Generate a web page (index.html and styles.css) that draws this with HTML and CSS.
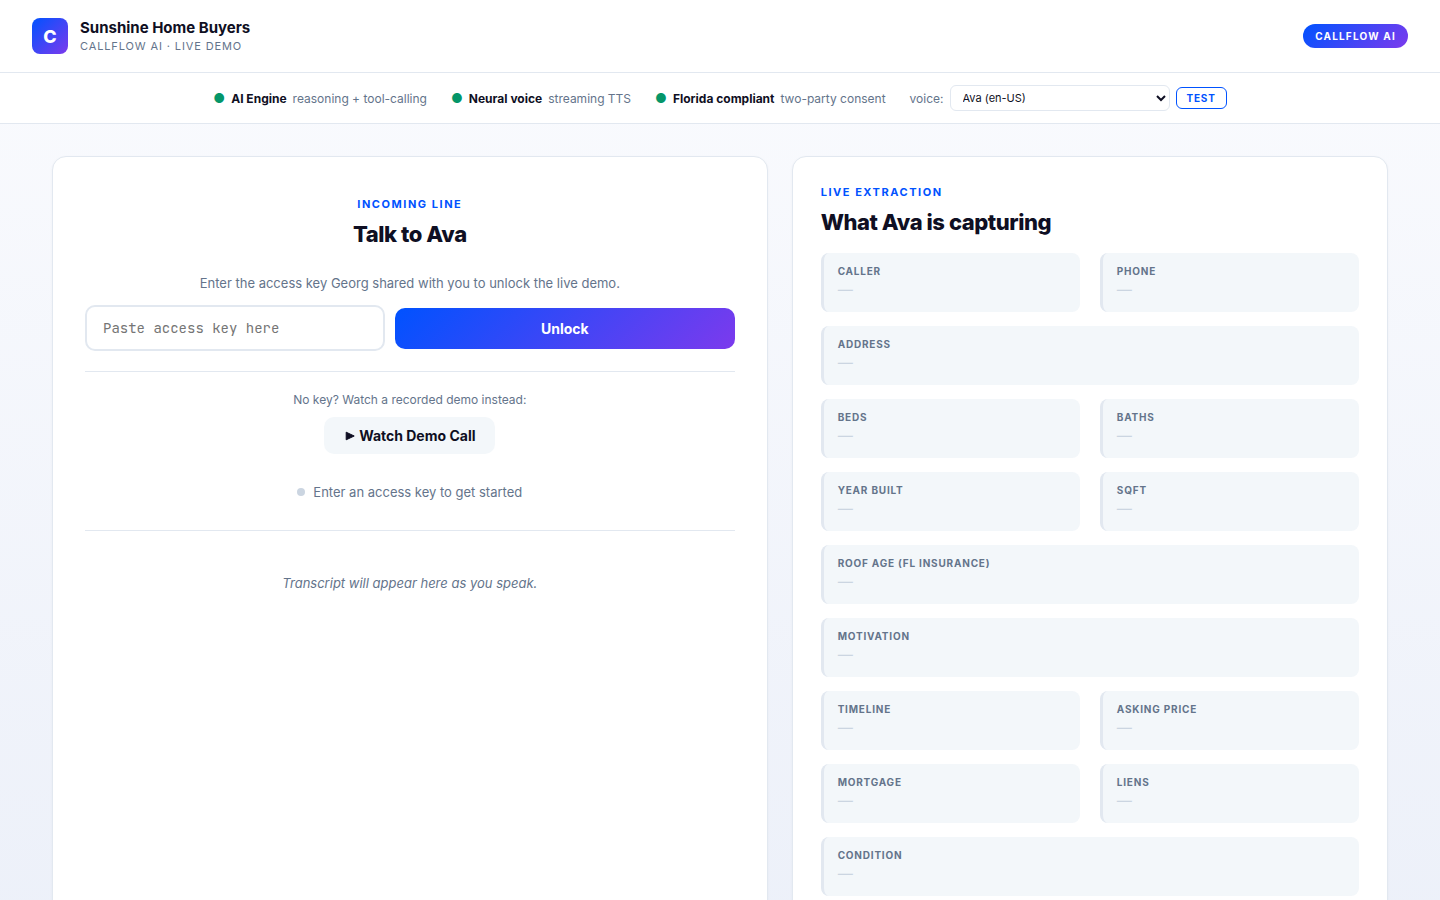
FILE: index.html
```html
<!DOCTYPE html>
<html lang="en">
<head>
  <meta charset="UTF-8" />
  <meta name="viewport" content="width=device-width, initial-scale=1.0"/>
  <title>Sunshine Home Buyers - CallFlow AI</title>
  <link rel="stylesheet" href="styles.css">
</head>
<body>
  <header class="topbar">
    <div class="brand">
      <div class="logo">C</div>
      <div>
        <div class="brand-name">Sunshine Home Buyers</div>
        <div class="brand-sub">CallFlow AI · Live Demo</div>
      </div>
    </div>
    <span class="badge">CallFlow AI</span>
  </header>

  <div class="status-bar">
    <div class="status-item"><span class="tick">●</span><strong>AI Engine</strong><span>reasoning + tool-calling</span></div>
    <div class="status-item"><span class="tick">●</span><strong>Neural voice</strong><span>streaming TTS</span></div>
    <div class="status-item"><span class="tick">●</span><strong>Florida compliant</strong><span>two-party consent</span></div>
    <div class="status-item">
      <label for="voice">voice:</label>
      <select id="voice" class="voice-select">
        <option>Ava (en-US)</option>
      </select>
      <button type="button" class="btn-test">TEST</button>
    </div>
  </div>

  <main class="layout">
    <section class="card call-card">
      <div class="eyebrow">Incoming line</div>
      <h2>Talk to Ava</h2>

      <form class="gate">
        <label for="access-key" class="gate-label">Enter the access key Georg shared with you to unlock the live demo.</label>
        <div class="gate-row">
          <input type="text" id="access-key" class="key-input" placeholder="Paste access key here" autocomplete="off" />
          <button type="button" class="btn-primary">Unlock</button>
        </div>
      </form>

      <div class="demo">
        <p class="demo-text">No key? Watch a recorded demo instead:</p>
        <button type="button" class="btn-secondary">
          <svg class="play" width="11" height="10" viewBox="0 0 11 10" aria-hidden="true"><path d="M2.2 1.2 L10.2 5 L2.2 8.8 Z" fill="currentColor" stroke="currentColor" stroke-linejoin="round"/></svg>
          Watch Demo Call
        </button>
      </div>

      <div class="call-status"><span class="dot"></span><span>Enter an access key to get started</span></div>

      <div class="transcript">
        <p class="transcript-empty">Transcript will appear here as you speak.</p>
      </div>
    </section>

    <section class="card data-card">
      <div class="eyebrow">Live extraction</div>
      <h2>What Ava is capturing</h2>
      <div class="fields">
        <div class="field"><div class="field-label">Caller</div><div class="field-value">—</div></div>
        <div class="field"><div class="field-label">Phone</div><div class="field-value">—</div></div>
        <div class="field full"><div class="field-label">Address</div><div class="field-value">—</div></div>
        <div class="field"><div class="field-label">Beds</div><div class="field-value">—</div></div>
        <div class="field"><div class="field-label">Baths</div><div class="field-value">—</div></div>
        <div class="field"><div class="field-label">Year built</div><div class="field-value">—</div></div>
        <div class="field"><div class="field-label">Sqft</div><div class="field-value">—</div></div>
        <div class="field full"><div class="field-label">Roof age (FL insurance)</div><div class="field-value">—</div></div>
        <div class="field full"><div class="field-label">Motivation</div><div class="field-value">—</div></div>
        <div class="field"><div class="field-label">Timeline</div><div class="field-value">—</div></div>
        <div class="field"><div class="field-label">Asking price</div><div class="field-value">—</div></div>
        <div class="field"><div class="field-label">Mortgage</div><div class="field-value">—</div></div>
        <div class="field"><div class="field-label">Liens</div><div class="field-value">—</div></div>
        <div class="field full"><div class="field-label">Condition</div><div class="field-value">—</div></div>
      </div>
    </section>
  </main>
</body>
</html>
```

FILE: styles.css
```css
:root {
  --blue: #0052ff;
  --purple: #7c3aed;
  --green: #059669;
  --ink: #0f0f23;
  --muted: #64748b;
  --faint: #cbd5e1;
  --line: #e2e8f0;
  --soft: #f3f7fa;
  --grad: linear-gradient(135deg, var(--blue), var(--purple));
}
* { box-sizing: border-box; }
body {
  margin: 0;
  min-height: 100vh;
  font-family: Inter, sans-serif;
  color: var(--ink);
  background: linear-gradient(180deg, #fafbfe 0%, #ecf0f9 100%);
}
button, input, select { font-family: inherit; }
button { cursor: pointer; }

/* Header */
.topbar {
  display: flex;
  align-items: center;
  justify-content: space-between;
  padding: 18px 32px;
  background: #fff;
  border-bottom: 1px solid var(--line);
}
.brand {
  display: flex;
  align-items: center;
  gap: 12px;
}
.logo {
  display: flex;
  align-items: center;
  justify-content: center;
  width: 36px;
  height: 36px;
  border-radius: 8px;
  background: var(--grad);
  color: #fff;
  font-size: 18px;
  font-weight: 800;
}
.brand-name {
  font-size: 15px;
  font-weight: 700;
  line-height: 18px;
}
.brand-sub {
  margin-top: 2px;
  font-size: 11px;
  line-height: 14px;
  letter-spacing: 0.08em;
  text-transform: uppercase;
  color: var(--muted);
}
.badge {
  padding: 6px 12px;
  border-radius: 12px;
  background: var(--grad);
  color: #fff;
  font-size: 10px;
  font-weight: 700;
  line-height: 12px;
  letter-spacing: 0.12em;
  text-transform: uppercase;
}

/* Status bar */
.status-bar {
  display: flex;
  flex-wrap: wrap;
  align-items: center;
  justify-content: center;
  gap: 24px;
  padding: 12px 32px;
  background: #fff;
  border-bottom: 1px solid var(--line);
  font-size: 12px;
  color: var(--muted);
}
.status-item {
  display: flex;
  align-items: center;
  gap: 6px;
}
.status-item strong { color: var(--ink); }
.tick {
  color: var(--green);
  font-size: 13px;
}
.voice-select {
  width: 220px;
  height: 26px;
  padding: 4px 8px;
  border: 1px solid var(--line);
  border-radius: 6px;
  background: #fff;
  color: var(--ink);
  font-size: 11px;
}
.btn-test {
  padding: 4px 10px;
  border: 1px solid var(--blue);
  border-radius: 6px;
  background: #fff;
  color: var(--blue);
  font-size: 10px;
  font-weight: 700;
  line-height: 12px;
  letter-spacing: 0.08em;
}

/* Layout */
.layout {
  display: grid;
  grid-template-columns: 1.2fr 1fr;
  gap: 24px;
  max-width: 1400px;
  margin: 0 auto;
  padding: 32px;
}
.card {
  background: #fff;
  border: 1px solid var(--line);
  border-radius: 14px;
  box-shadow: 0 1px 3px rgba(15, 15, 35, 0.04);
}
.eyebrow {
  margin-bottom: 8px;
  font-size: 11px;
  font-weight: 700;
  line-height: 14px;
  letter-spacing: 0.14em;
  text-transform: uppercase;
  color: var(--blue);
}
h2 {
  margin: 0;
  font-size: 22px;
  font-weight: 800;
  line-height: 30px;
  letter-spacing: -0.02em;
}

/* Call panel */
.call-card {
  padding: 40px 32px;
  text-align: center;
}
.gate-label {
  display: block;
  margin: 26px 0 14px;
  font-size: 13px;
  line-height: 16px;
  color: var(--muted);
}
.gate-row {
  display: flex;
  align-items: center;
  gap: 10px;
}
.key-input {
  width: 300px;
  height: 46px;
  padding: 12px 16px;
  border: 2px solid var(--line);
  border-radius: 10px;
  color: var(--ink);
  font-family: 'JetBrains Mono', 'Liberation Mono', monospace;
  font-size: 14px;
}
.btn-primary,
.btn-secondary {
  padding: 12px 20px;
  border: none;
  border-radius: 10px;
  font-size: 14px;
  font-weight: 700;
  line-height: 17px;
}
.btn-primary {
  flex: 1;
  background: var(--grad);
  color: #fff;
}
.demo {
  display: flex;
  flex-direction: column;
  align-items: center;
  margin-top: 20px;
  padding-top: 20px;
  border-top: 1px solid var(--line);
}
.demo-text {
  margin: 0 0 10px;
  font-size: 12px;
  line-height: 15px;
  color: var(--muted);
}
.btn-secondary {
  display: flex;
  align-items: center;
  gap: 4px;
  padding: 10px 20px;
  background: var(--soft);
  color: var(--ink);
}
.play { flex: none; }
.call-status {
  display: flex;
  align-items: center;
  justify-content: center;
  gap: 8px;
  margin-top: 30px;
  font-size: 13px;
  line-height: 16px;
  color: var(--muted);
}
.dot {
  width: 8px;
  height: 8px;
  border-radius: 50%;
  background: var(--faint);
}
.transcript {
  margin-top: 30px;
  padding-top: 44px;
  border-top: 1px solid var(--line);
}
.transcript-empty {
  margin: 0;
  font-size: 13px;
  font-style: italic;
  line-height: 16px;
  color: var(--muted);
}

/* Extraction panel */
.data-card { padding: 28px; }
.fields {
  display: grid;
  grid-template-columns: 1fr 1fr;
  gap: 14px 20px;
  margin-top: 16px;
}
.field {
  padding: 12px 14px;
  border-left: 3px solid var(--line);
  border-radius: 8px;
  background: var(--soft);
}
.field.full { grid-column: 1 / -1; }
.field-label {
  margin-bottom: 4px;
  font-size: 10px;
  font-weight: 700;
  line-height: 12px;
  letter-spacing: 0.08em;
  text-transform: uppercase;
  color: var(--muted);
}
.field-value {
  min-height: 19px;
  font-size: 15px;
  font-style: italic;
  line-height: 17px;
  color: var(--faint);
}
```
